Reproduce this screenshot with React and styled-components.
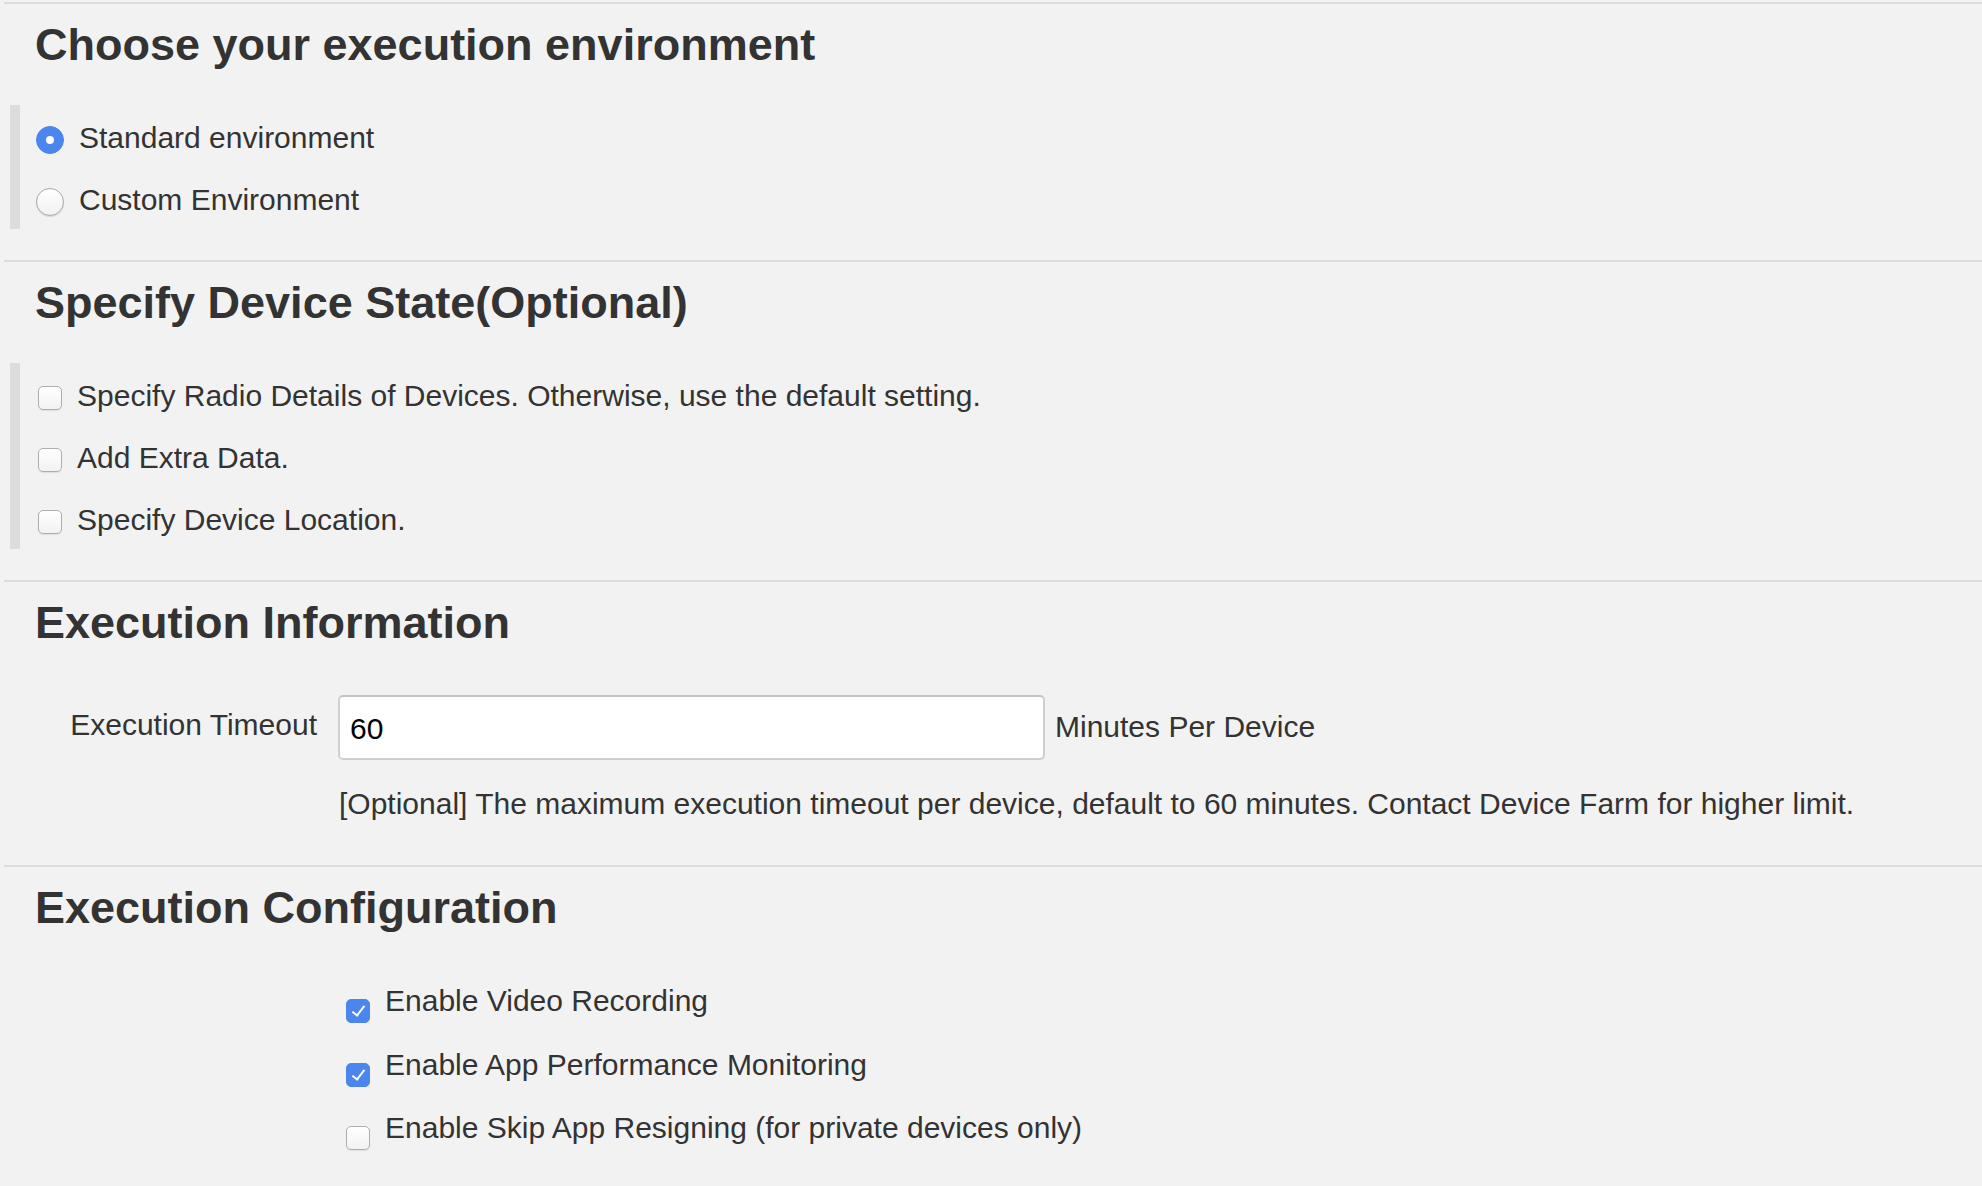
import React, { useState } from "react";
import styled, { createGlobalStyle, css } from "styled-components";

const GlobalStyle = createGlobalStyle`
  html, body {
    margin: 0;
    padding: 0;
    background: #f2f2f2;
  }
  body {
    font-family: "Liberation Sans", Arial, Helvetica, sans-serif;
    color: #333;
  }
`;

const Page = styled.div`
  box-sizing: border-box;
  min-height: 100vh;
  padding: 2px 0 0 4px;
  background: #f2f2f2;
`;

const Section = styled.section`
  border-top: 2px solid #dcdcdc;
  padding-bottom: ${(p) => p.$pb || 0}px;
`;

const Title = styled.h3`
  margin: 16px 0 0 31px;
  font-size: 45px;
  line-height: 50px;
  font-weight: bold;
  color: #333;
  white-space: nowrap;
`;

const OptionGroup = styled.div`
  margin: 35px 0 0 6px;
  border-left: 10px solid #dcdcdc;
  padding-left: 16px;
`;

const OptionRow = styled.label`
  box-sizing: border-box;
  display: flex;
  align-items: center;
  gap: 15px;
  height: 62px;
  padding-top: 3px;
  font-size: 30px;
  line-height: 59px;
  color: #333;
  white-space: nowrap;
  cursor: pointer;
`;

const Radio = styled.input.attrs({ type: "radio" })`
  appearance: none;
  position: relative;
  box-sizing: border-box;
  width: 28px;
  height: 28px;
  margin: 4px 0 0 0;
  border-radius: 50%;
  border: 1px solid #a8a8a8;
  background: linear-gradient(#ffffff, #f1f1f1);
  box-shadow: 0 1px 1px rgba(0, 0, 0, 0.12);
  flex-shrink: 0;
  cursor: pointer;

  &:checked {
    border-color: #4a86ee;
    background: #4a86ee;
    box-shadow: none;
  }
  &:checked::after {
    content: "";
    position: absolute;
    left: 50%;
    top: 50%;
    width: 8px;
    height: 8px;
    margin: -4px 0 0 -4px;
    border-radius: 50%;
    background: #fff;
  }
`;

const Checkbox = styled.input.attrs({ type: "checkbox" })`
  appearance: none;
  position: relative;
  box-sizing: border-box;
  width: 24px;
  height: 24px;
  border-radius: 5px;
  border: 1px solid #aeaeae;
  background: linear-gradient(#ffffff, #f2f2f2);
  box-shadow: 0 1px 1px rgba(0, 0, 0, 0.08);
  flex-shrink: 0;
  cursor: pointer;
  ${(p) =>
    p.$drop
      ? css`
          margin: 30px 0 0 0;
        `
      : css`
          margin: 4px 0 0 2px;
        `}

  &:checked {
    border-color: #4a86ee;
    background: #4a86ee;
    box-shadow: none;
  }
  &:checked::after {
    content: "";
    position: absolute;
    left: 8px;
    top: 3px;
    width: 5px;
    height: 11px;
    border-right: 2.5px solid #fff;
    border-bottom: 2.5px solid #fff;
    transform: rotate(38deg);
  }
`;

const FormRow = styled.div`
  display: flex;
  align-items: flex-start;
  height: 66px;
  margin-top: 46px;
`;

const FieldLabel = styled.label`
  width: 313px;
  margin-right: 21px;
  text-align: right;
  font-size: 30px;
  line-height: 61px;
  color: #333;
  white-space: nowrap;
`;

const TextInput = styled.input`
  box-sizing: border-box;
  width: 707px;
  height: 65px;
  margin-top: 1px;
  padding: 2px 10px 0;
  border: 2px solid #cfcfcf;
  border-top-color: #c4c4c4;
  border-radius: 5px;
  background: #fff;
  font-family: "Liberation Sans", Arial, sans-serif;
  font-size: 30px;
  color: #000;
  outline: none;
`;

const Addon = styled.span`
  margin-left: 10px;
  font-size: 30px;
  line-height: 66px;
  color: #333;
  white-space: nowrap;
`;

const Help = styled.p`
  margin: 23px 0 0 335px;
  font-size: 30px;
  line-height: 42px;
  color: #333;
  white-space: nowrap;
`;

const ConfigList = styled.div`
  margin: 36px 0 0 342px;
`;

const ConfigRow = styled.label`
  display: flex;
  align-items: flex-start;
  gap: 15px;
  height: 63.5px;
  font-size: 30px;
  line-height: 63.5px;
  color: #333;
  white-space: nowrap;
  cursor: pointer;
`;

const deviceStateOptions = [
  "Specify Radio Details of Devices. Otherwise, use the default setting.",
  "Add Extra Data.",
  "Specify Device Location.",
];

const App = () => {
  const [env, setEnv] = useState("standard");
  const [state, setState] = useState([false, false, false]);
  const [timeout, setTimeoutValue] = useState("60");
  const [config, setConfig] = useState({
    video: true,
    perf: true,
    resign: false,
  });

  const toggleState = (i) =>
    setState((s) => s.map((v, j) => (j === i ? !v : v)));

  const toggleConfig = (key) =>
    setConfig((c) => ({ ...c, [key]: !c[key] }));

  return (
    <Page>
      <GlobalStyle />

      <Section $pb={31}>
        <Title>Choose your execution environment</Title>
        <OptionGroup>
          <OptionRow>
            <Radio
              name="env"
              checked={env === "standard"}
              onChange={() => setEnv("standard")}
            />
            Standard environment
          </OptionRow>
          <OptionRow>
            <Radio
              name="env"
              checked={env === "custom"}
              onChange={() => setEnv("custom")}
            />
            Custom Environment
          </OptionRow>
        </OptionGroup>
      </Section>

      <Section $pb={31}>
        <Title>Specify Device State(Optional)</Title>
        <OptionGroup>
          {deviceStateOptions.map((text, i) => (
            <OptionRow key={text}>
              <Checkbox checked={state[i]} onChange={() => toggleState(i)} />
              {text}
            </OptionRow>
          ))}
        </OptionGroup>
      </Section>

      <Section $pb={40}>
        <Title>Execution Information</Title>
        <FormRow>
          <FieldLabel htmlFor="timeout">Execution Timeout</FieldLabel>
          <TextInput
            id="timeout"
            value={timeout}
            onChange={(e) => setTimeoutValue(e.target.value)}
          />
          <Addon>Minutes Per Device</Addon>
        </FormRow>
        <Help>
          [Optional] The maximum execution timeout per device, default to 60
          minutes. Contact Device Farm for higher limit.
        </Help>
      </Section>

      <Section>
        <Title>Execution Configuration</Title>
        <ConfigList>
          <ConfigRow>
            <Checkbox
              $drop
              checked={config.video}
              onChange={() => toggleConfig("video")}
            />
            Enable Video Recording
          </ConfigRow>
          <ConfigRow>
            <Checkbox
              $drop
              checked={config.perf}
              onChange={() => toggleConfig("perf")}
            />
            Enable App Performance Monitoring
          </ConfigRow>
          <ConfigRow>
            <Checkbox
              $drop
              checked={config.resign}
              onChange={() => toggleConfig("resign")}
            />
            Enable Skip App Resigning (for private devices only)
          </ConfigRow>
        </ConfigList>
      </Section>
    </Page>
  );
};

export default App;
